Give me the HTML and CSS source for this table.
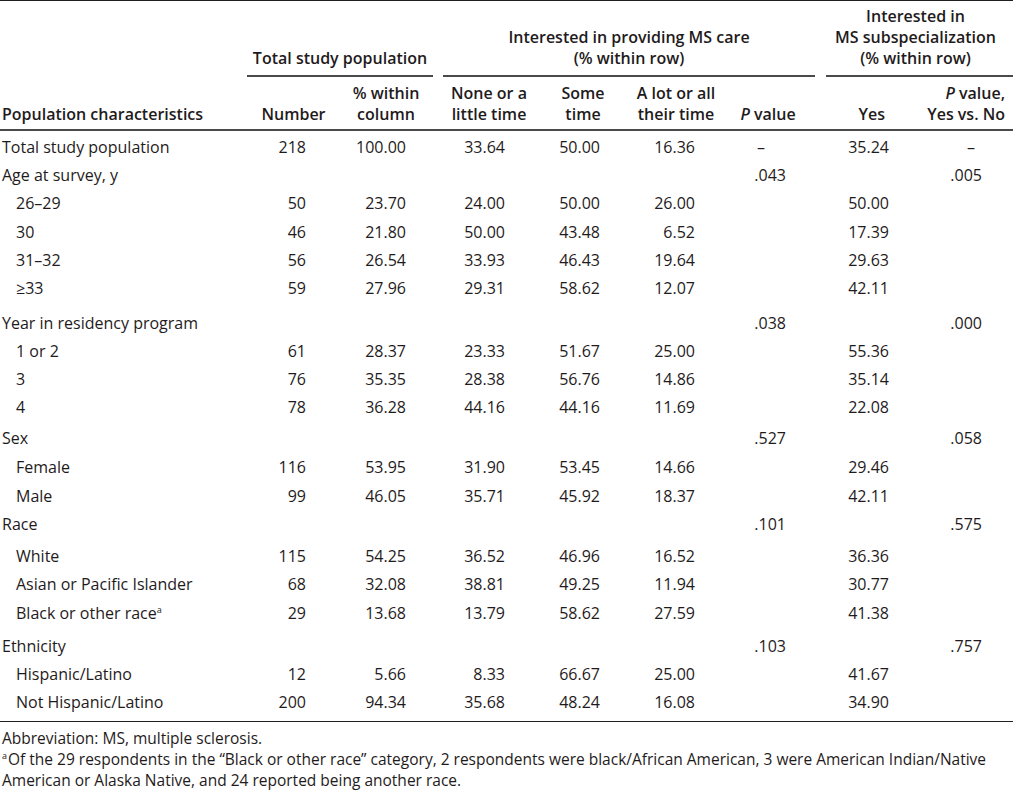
FILE: index.html
```html
<!DOCTYPE html>
<html lang="en">
<head>
<meta charset="utf-8">
<title>Table</title>
<link rel="stylesheet" href="styles.css">
</head>
<body>
<div class="page">
<table class="data">
  <colgroup>
    <col class="c1"><col class="c2"><col class="c3"><col class="c4"><col class="c5"><col class="c6"><col class="c7"><col class="c8"><col class="c9">
  </colgroup>
  <thead>
    <tr class="span-row">
      <th class="blank"></th>
      <th class="span" colspan="2"><div class="span-in span-total">Total study population</div></th>
      <th class="span" colspan="4"><div class="span-in span-care">Interested in providing MS care<br>(% within row)</div></th>
      <th class="span" colspan="2"><div class="span-in span-sub">Interested in<br>MS subspecialization<br>(% within row)</div></th>
    </tr>
    <tr class="sub-row">
      <th class="h1">Population characteristics</th>
      <th class="h2">Number</th>
      <th class="h3">% within<br>column</th>
      <th class="h4">None or a<br>little time</th>
      <th class="h5">Some<br>time</th>
      <th class="h6">A lot or all<br>their time</th>
      <th class="h7"><i>P</i> value</th>
      <th class="h8">Yes</th>
      <th class="h9"><i>P</i> value,<br>Yes vs. No</th>
    </tr>
  </thead>
  <tbody>
    <tr class="first"><td>Total study population</td><td>218</td><td>100.00</td><td>33.64</td><td>50.00</td><td>16.36</td><td class="dash1">–</td><td>35.24</td><td class="dash2">–</td></tr>
    <tr><td>Age at survey, y</td><td></td><td></td><td></td><td></td><td></td><td>.043</td><td></td><td>.005</td></tr>
    <tr><td class="ind">26–29</td><td>50</td><td>23.70</td><td>24.00</td><td>50.00</td><td>26.00</td><td></td><td>50.00</td><td></td></tr>
    <tr class="step"><td class="ind">30</td><td>46</td><td>21.80</td><td>50.00</td><td>43.48</td><td>6.52</td><td></td><td>17.39</td><td></td></tr>
    <tr><td class="ind">31–32</td><td>56</td><td>26.54</td><td>33.93</td><td>46.43</td><td>19.64</td><td></td><td>29.63</td><td></td></tr>
    <tr><td class="ind">≥33</td><td>59</td><td>27.96</td><td>29.31</td><td>58.62</td><td>12.07</td><td></td><td>42.11</td><td></td></tr>
    <tr class="grp-xl"><td>Year in residency program</td><td></td><td></td><td></td><td></td><td></td><td>.038</td><td></td><td>.000</td></tr>
    <tr><td class="ind">1 or 2</td><td>61</td><td>28.37</td><td>23.33</td><td>51.67</td><td>25.00</td><td></td><td>55.36</td><td></td></tr>
    <tr><td class="ind">3</td><td>76</td><td>35.35</td><td>28.38</td><td>56.76</td><td>14.86</td><td></td><td>35.14</td><td></td></tr>
    <tr><td class="ind">4</td><td>78</td><td>36.28</td><td>44.16</td><td>44.16</td><td>11.69</td><td></td><td>22.08</td><td></td></tr>
    <tr class="grp-sm"><td>Sex</td><td></td><td></td><td></td><td></td><td></td><td>.527</td><td></td><td>.058</td></tr>
    <tr class="step"><td class="ind">Female</td><td>116</td><td>53.95</td><td>31.90</td><td>53.45</td><td>14.66</td><td></td><td>29.46</td><td></td></tr>
    <tr class="step"><td class="ind">Male</td><td>99</td><td>46.05</td><td>35.71</td><td>45.92</td><td>18.37</td><td></td><td>42.11</td><td></td></tr>
    <tr><td>Race</td><td></td><td></td><td></td><td></td><td></td><td>.101</td><td></td><td>.575</td></tr>
    <tr class="grp"><td class="ind">White</td><td>115</td><td>54.25</td><td>36.52</td><td>46.96</td><td>16.52</td><td></td><td>36.36</td><td></td></tr>
    <tr><td class="ind">Asian or Pacific Islander</td><td>68</td><td>32.08</td><td>38.81</td><td>49.25</td><td>11.94</td><td></td><td>30.77</td><td></td></tr>
    <tr class="step"><td class="ind">Black or other race<sup class="fn">a</sup></td><td>29</td><td>13.68</td><td>13.79</td><td>58.62</td><td>27.59</td><td></td><td>41.38</td><td></td></tr>
    <tr class="grp-lg"><td>Ethnicity</td><td></td><td></td><td></td><td></td><td></td><td>.103</td><td></td><td>.757</td></tr>
    <tr><td class="ind">Hispanic/Latino</td><td>12</td><td>5.66</td><td>8.33</td><td>66.67</td><td>25.00</td><td></td><td>41.67</td><td></td></tr>
    <tr class="last"><td class="ind">Not Hispanic/Latino</td><td>200</td><td>94.34</td><td>35.68</td><td>48.24</td><td>16.08</td><td></td><td>34.90</td><td></td></tr>
  </tbody>
</table>
<div class="notes">
  <p>Abbreviation: MS, multiple sclerosis.</p>
  <p><sup class="fn">a</sup>Of the 29 respondents in the “Black or other race” category, 2 respondents were black/African American, 3 were American Indian/Native American or Alaska Native, and 24 reported being another race.</p>
</div>
</div>
</body>
</html>
```

FILE: styles.css
```css
html, body {
  margin: 0;
  padding: 0;
  background: #ffffff;
}

body {
  font-family: "Open Sans", "Noto Sans", sans-serif;
  font-size: 16px;
  color: #1f1b1c;
}

.page {
  width: 1013px;
}

.data {
  width: 1013px;
  border-collapse: collapse;
  table-layout: fixed;
  border-top: 1.5px solid #231f20;
  border-bottom: 1.5px solid #231f20;
}

.c1 { width: 247px; }
.c2 { width: 93px; }
.c3 { width: 98px; }
.c4 { width: 97px; }
.c5 { width: 96px; }
.c6 { width: 90px; }
.c7 { width: 94px; }
.c8 { width: 85px; }
.c9 { width: 113px; }

th {
  font-weight: 600;
  line-height: 21px;
  vertical-align: bottom;
  padding: 0;
}

th i {
  font-weight: 600;
}

.span-row th {
  padding-top: 5px;
}

.span-in {
  text-align: center;
  padding-bottom: 6px;
  border-bottom: 2px solid #4a4a4a;
}

.span-total {
  margin-right: 5px;
}

.span-care {
  margin-left: 5px;
}

.span-sub {
  margin-left: 11px;
  padding-right: 8px;
}

.sub-row th {
  padding-top: 6px;
  padding-bottom: 4px;
  line-height: 21px;
  border-bottom: 2px solid #4a4a4a;
  text-align: center;
}

.sub-row .h1 {
  text-align: left;
  padding-left: 2px;
}

.sub-row .h3 { padding-right: 6px; }
.sub-row .h4 { padding-left: 5px; }
.sub-row .h8 { text-align: right; padding-right: 15px; }
.sub-row .h9 { text-align: right; padding-right: 8px; }

td {
  height: 28px;
  padding: 0;
  line-height: 22px;
  text-align: right;
  vertical-align: middle;
  white-space: nowrap;
}

td:nth-child(1) { text-align: left; padding-left: 2px; }
td:nth-child(2) { padding-right: 34px; }
td:nth-child(3) { padding-right: 32px; }
td:nth-child(4) { padding-right: 30px; }
td:nth-child(5) { padding-right: 31px; }
td:nth-child(6) { padding-right: 26px; }
td:nth-child(7) { padding-right: 29px; }
td:nth-child(8) { padding-right: 11px; }
td:nth-child(9) { padding-right: 31px; }

td.ind { padding-left: 16px; }

td.dash1 { padding-right: 50px; }
td.dash2 { padding-right: 38px; }

tr.first td { padding-top: 2px; }
tr.grp-sm td { padding-top: 3px; }
tr.grp td { padding-top: 4px; }
tr.grp-lg td { padding-top: 5px; }
tr.grp-xl td { padding-top: 7px; }
tr.step td { padding-top: 1px; }
tr.last td { padding-bottom: 5px; }

.fn {
  display: inline-block;
  font-size: 9px;
  vertical-align: 6px;
  line-height: 9px;
  margin-right: 1px;
}

.notes {
  padding: 6px 0 0 2px;
  font-size: 15.5px;
  line-height: 21px;
}

.notes p {
  margin: 0;
}
```
